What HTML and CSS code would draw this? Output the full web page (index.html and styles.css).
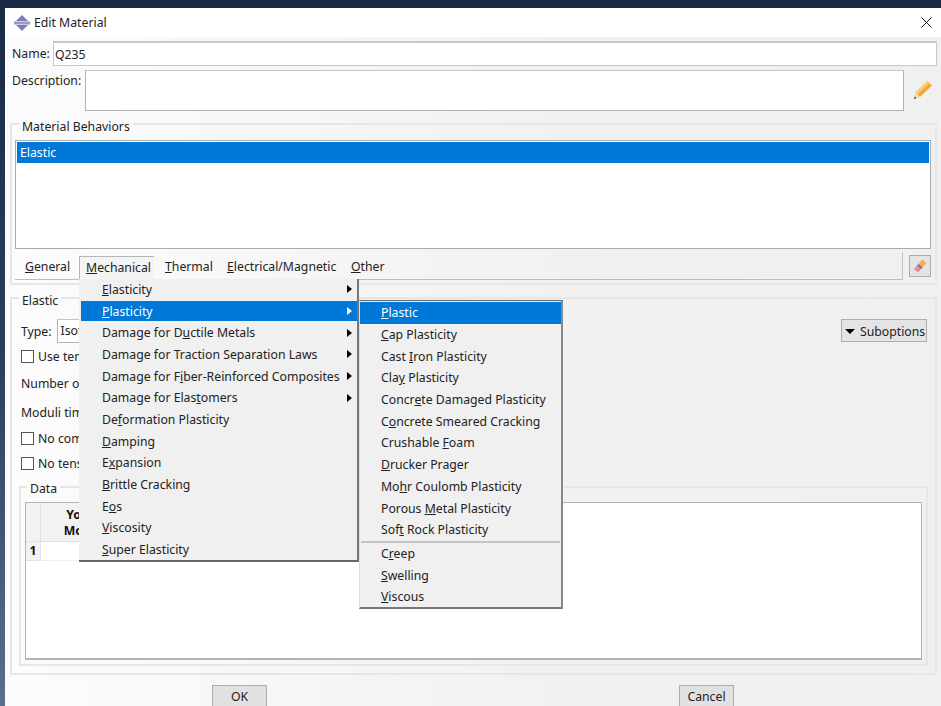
FILE: index.html
```html
<!DOCTYPE html>
<html lang="en">
<head>
  <meta charset="UTF-8">
  <meta name="viewport" content="width=device-width, initial-scale=1.0">
  <title>Edit Material</title>
  <link rel="stylesheet" href="styles.css">
</head>
<body>
<div class="window">
  <div class="titlebar">
    <svg class="app-icon" width="16" height="16" viewBox="0 0 16 16">
      <path d="M8 0L14 6H2Z" fill="#7f7bb8"/>
      <rect x="0" y="6.5" width="16" height="3" fill="#9a97c8"/>
      <path d="M8 16L14 10H2Z" fill="#7f7bb8"/>
    </svg>
    <span class="title">Edit Material</span>
    <svg class="close" width="11" height="11" viewBox="0 0 11 11">
      <path d="M0.5 0.5L10.5 10.5M10.5 0.5L0.5 10.5" stroke="#111" stroke-width="1" fill="none"/>
    </svg>
  </div>

  <div class="form">
    <div class="name-row">
      <label class="name-label">Name:</label>
      <div class="input name-input">Q235</div>
    </div>
    <div class="desc-row">
      <label class="desc-label">Description:</label>
      <div class="input desc-input"></div>
      <svg class="pencil" width="20" height="20" viewBox="0 0 20 20">
        <path d="M14.5 1L19 5.5L7 17L2.5 12.5Z" fill="#f0a53c"/>
        <path d="M14.5 1L16.5 3L4.5 14.5L2.5 12.5Z" fill="#f8cf78"/>
        <path d="M2.5 12.5L7 17L1 19Z" fill="#f4d9b0"/>
        <path d="M1.8 16.6L3.4 18.2L1 19Z" fill="#333"/>
      </svg>
    </div>

    <div class="group behaviors">
      <span class="legend">Material Behaviors</span>
      <div class="listbox">
        <div class="list-item selected">Elastic</div>
      </div>
      <div class="toolbar">
        <div class="menubar">
          <span class="tab tab-general"><u>G</u>eneral</span>
          <span class="tab tab-open"><u>M</u>echanical</span>
          <span class="tab tab-thermal"><u>T</u>hermal</span>
          <span class="tab tab-electrical"><u>E</u>lectrical/Magnetic</span>
          <span class="tab tab-other"><u>O</u>ther</span>
        </div>
        <div class="icon-btn">
          <svg width="16" height="16" viewBox="0 0 16 16">
            <path d="M10.5 1.5L14.5 5L10.5 9.5L6.5 6Z" fill="#eeb04c"/>
            <path d="M6.5 6L10.5 9.5L9 11.2L5 7.7Z" fill="#777"/>
            <path d="M5 7.7L9 11.2L6 14.5L2 11Z" fill="#e58a9c"/>
          </svg>
        </div>
      </div>
    </div>

    <div class="group elastic">
      <span class="legend">Elastic</span>
      <div class="type-row">
        <div class="type-left">
          <span>Type:</span>
          <div class="input type-input">Isotropic</div>
        </div>
        <div class="suboptions"><span class="down"></span>Suboptions</div>
      </div>
      <div class="check-row first-check"><span class="checkbox"></span>Use temperature-dependent data</div>
      <div class="text-row number-row">Number of field variables:</div>
      <div class="text-row moduli-row">Moduli time scale (for viscoelasticity):</div>
      <div class="check-row no-comp"><span class="checkbox"></span>No compression</div>
      <div class="check-row no-tens"><span class="checkbox"></span>No tension</div>

      <div class="group data">
        <span class="legend">Data</span>
        <div class="table">
          <div class="corner"></div>
          <div class="col-head">Young's<br>Modulus</div>
          <div class="col-head">Poisson's<br>Ratio</div>
          <div class="row-head">1</div>
          <div class="cell"></div>
          <div class="cell"></div>
        </div>
      </div>
    </div>
  </div>

  <div class="footer">
    <div class="btn">OK</div>
    <div class="btn">Cancel</div>
  </div>

  <div class="menu main-menu">
    <div class="item"><span><u>E</u>lasticity</span><i class="arrow"></i></div>
    <div class="item active"><span><u>P</u>lasticity</span><i class="arrow"></i></div>
    <div class="item"><span>Damage for D<u>u</u>ctile Metals</span><i class="arrow"></i></div>
    <div class="item"><span>Dama<u>g</u>e for Traction Separation Laws</span><i class="arrow"></i></div>
    <div class="item"><span>Damage for F<u>i</u>ber-Reinforced Composites</span><i class="arrow"></i></div>
    <div class="item"><span>Damage for Elas<u>t</u>omers</span><i class="arrow"></i></div>
    <div class="item"><span>De<u>f</u>ormation Plasticity</span></div>
    <div class="item"><span><u>D</u>amping</span></div>
    <div class="item"><span>E<u>x</u>pansion</span></div>
    <div class="item"><span><u>B</u>rittle Cracking</span></div>
    <div class="item"><span>E<u>o</u>s</span></div>
    <div class="item"><span><u>V</u>iscosity</span></div>
    <div class="item"><span><u>S</u>uper Elasticity</span></div>
  </div>

  <div class="menu sub-menu">
    <div class="item active"><span><u>P</u>lastic</span></div>
    <div class="item"><span><u>C</u>ap Plasticity</span></div>
    <div class="item"><span>Cast <u>I</u>ron Plasticity</span></div>
    <div class="item"><span>Cla<u>y</u> Plasticity</span></div>
    <div class="item"><span>Concr<u>e</u>te Damaged Plasticity</span></div>
    <div class="item"><span>C<u>o</u>ncrete Smeared Cracking</span></div>
    <div class="item"><span>Crushable <u>F</u>oam</span></div>
    <div class="item"><span><u>D</u>rucker Prager</span></div>
    <div class="item"><span>Mo<u>h</u>r Coulomb Plasticity</span></div>
    <div class="item"><span>Porous <u>M</u>etal Plasticity</span></div>
    <div class="item"><span>Sof<u>t</u> Rock Plasticity</span></div>
    <div class="separator"></div>
    <div class="item"><span>C<u>r</u>eep</span></div>
    <div class="item"><span><u>S</u>welling</span></div>
    <div class="item"><span><u>V</u>iscous</span></div>
  </div>
</div>
</body>
</html>
```

FILE: styles.css
```css
* {
  box-sizing: border-box;
}
html, body {
  height: 706px;
  margin: 0;
  overflow: hidden;
}
body {
  background: linear-gradient(180deg, #1a2a45 0%, #2c3d5a 50%, #5d6e88 100%);
  font-family: "Noto Sans", sans-serif;
  font-size: 12.25px;
  color: #222;
}
u {
  text-underline-offset: 1px;
}

.window {
  position: relative;
  margin: 8px 0 0 5px;
  height: 698px;
  background: linear-gradient(90deg, #fcfcfc 0%, #f1f1f1 60%, #f0f0f0 100%);
  overflow: hidden;
}

.titlebar {
  display: flex;
  align-items: center;
  height: 29px;
  padding: 0 9px 0 9px;
  margin-bottom: 2px;
  background: #fff;
}
.app-icon {
  margin-right: 4px;
}
.title {
  flex: 1;
}

.form {
  padding: 2px 4px 0 5px;
}
.input {
  background: #fff;
  border: 1px solid #b4b4b4;
  border-top-color: #c4c4c4;
}
.name-row {
  display: flex;
  align-items: center;
  height: 25px;
}
.name-label {
  margin-left: 2px;
  width: 41px;
}
.name-input {
  flex: 1;
  height: 25px;
  padding: 3px 1px;
  border-width: 2px 1px 1px 1px;
  border-color: #c8c8c8;
}
.desc-row {
  display: flex;
  margin-top: 4px;
  height: 41px;
}
.desc-label {
  width: 73px;
  margin-left: 2px;
  line-height: 21px;
}
.desc-input {
  width: 819px;
  height: 41px;
}
.pencil {
  margin: 10px 0 0 9px;
}

.group {
  position: relative;
  border: 2px solid #e6e6e6;
}
.legend {
  position: absolute;
  top: -7px;
  left: 7px;
  padding: 0 3px;
  background: #fafafa;
  line-height: 17px;
}

.behaviors {
  height: 162px;
  margin-top: 12px;
  padding: 15px 4px 0 3px;
}
.listbox {
  height: 109px;
  padding: 1px;
  background: #fff;
  border: 1px solid #ababab;
}
.list-item {
  height: 21px;
  padding-left: 3px;
  line-height: 21px;
}
.selected {
  background: #0078d7;
  color: #fff;
}

.toolbar {
  display: flex;
  margin-top: 3px;
}
.menubar {
  display: flex;
  width: 888px;
  height: 28px;
  border-right: 1px solid #c4c4c4;
  border-bottom: 1px solid #bdbdbd;
}
.tab {
  height: 24px;
  margin-top: 4px;
  line-height: 22px;
  white-space: nowrap;
}
.tab-general {
  margin-left: 10px;
  width: 54px;
}
.tab-open {
  width: 75px;
  padding-left: 6px;
  border-top: 1px solid #b5b5b5;
  border-left: 1px solid #b5b5b5;
  background: #f4f4f4;
  line-height: 21px;
}
.tab-thermal {
  margin-left: 11px;
  width: 62px;
}
.tab-electrical {
  width: 124px;
}
.icon-btn {
  display: flex;
  align-items: center;
  justify-content: center;
  width: 22px;
  height: 22px;
  margin: 3px 0 0 6px;
  background: #e4e4e4;
  border: 1px solid #adadad;
}

.elastic {
  height: 378px;
  margin-top: 12px;
  padding: 20px 7px 0 7px;
}
.type-row {
  display: flex;
  justify-content: space-between;
  height: 23px;
}
.type-left {
  display: flex;
  align-items: center;
  padding-left: 2px;
  padding-top: 1px;
}
.type-input {
  width: 120px;
  height: 24px;
  margin-left: 5px;
  padding: 2px 3px;
}
.suboptions {
  display: flex;
  align-items: center;
  width: 86px;
  margin-right: 1px;
  padding-left: 3px;
  padding-top: 1px;
  background: #e4e4e4;
  border: 1px solid #adadad;
}
.down {
  width: 0;
  height: 0;
  margin-right: 5px;
  border-left: 5px solid transparent;
  border-right: 5px solid transparent;
  border-top: 5px solid #000;
}
.check-row,
.text-row {
  display: flex;
  align-items: center;
  height: 14px;
  padding-left: 2px;
  white-space: nowrap;
}
.checkbox {
  width: 13px;
  height: 13px;
  margin-right: 4px;
  background: #fff;
  border: 1px solid #555;
}
.first-check {
  margin-top: 7px;
}
.number-row {
  margin-top: 13px;
}
.moduli-row {
  margin-top: 15px;
}
.no-comp {
  margin-top: 12px;
}
.no-tens {
  margin-top: 11px;
}

.data {
  height: 180px;
  margin-top: 16px;
  padding: 14px 4px 0 4px;
}
.data .legend {
  top: -8px;
  left: 6px;
}
.table {
  display: grid;
  grid-template-columns: 15px 99px 95px;
  grid-template-rows: 39px 19px;
  height: 158px;
  background: #fff;
  border: 1px solid #b4b4b4;
  border-bottom-width: 2px;
}
.corner,
.col-head,
.row-head {
  background: #f2f2f2;
  border-right: 1px solid #e2e2e2;
  border-bottom: 1px solid #e2e2e2;
}
.col-head {
  font-weight: 700;
  text-align: center;
  line-height: 16px;
  padding-top: 4px;
  color: #111;
}
.row-head {
  font-weight: 700;
  text-align: center;
  color: #111;
}
.cell {
  border-right: 1px solid #eee;
  border-bottom: 1px solid #eee;
}

.footer {
  display: flex;
  justify-content: space-around;
  margin-top: 10px;
  padding: 0 1px;
}
.btn {
  width: 55px;
  height: 24px;
  background: #e1e1e1;
  border: 1px solid #adadad;
  text-align: center;
  line-height: 22px;
}

.menu {
  position: absolute;
  background: #f0f0f0;
}
.main-menu {
  top: 271px;
  left: 74px;
  width: 280px;
  height: 283px;
  padding-left: 2px;
  border-right: 2px solid #777;
  border-bottom: 2px solid #666;
}
.main-menu .item:first-child {
  margin-top: -0.5px;
}
.sub-menu {
  top: 292px;
  left: 354px;
  width: 204px;
  height: 309px;
  padding: 1px 0 0 0;
  border-top: 1px solid #666;
  border-right: 2px solid #888;
  border-bottom: 2px solid #777;
  border-left: 1px solid #ddd;
}
.item {
  display: flex;
  align-items: center;
  height: 21.7px;
  padding-left: 21px;
  padding-right: 5px;
  white-space: nowrap;
  border-top: 1px solid transparent;
  border-bottom: 1px solid transparent;
  background-clip: padding-box;
}
.sub-menu .item {
  border: 0;
}
.item.active {
  background-color: #0078d7;
  color: #fff;
}
.arrow {
  width: 0;
  height: 0;
  margin-left: auto;
  border-top: 4px solid transparent;
  border-bottom: 4px solid transparent;
  border-left: 5px solid #000;
}
.active .arrow {
  border-left-color: #fff;
}
.separator {
  height: 2px;
  margin: 0 1px;
  background: #c4c4c4;
}
```
